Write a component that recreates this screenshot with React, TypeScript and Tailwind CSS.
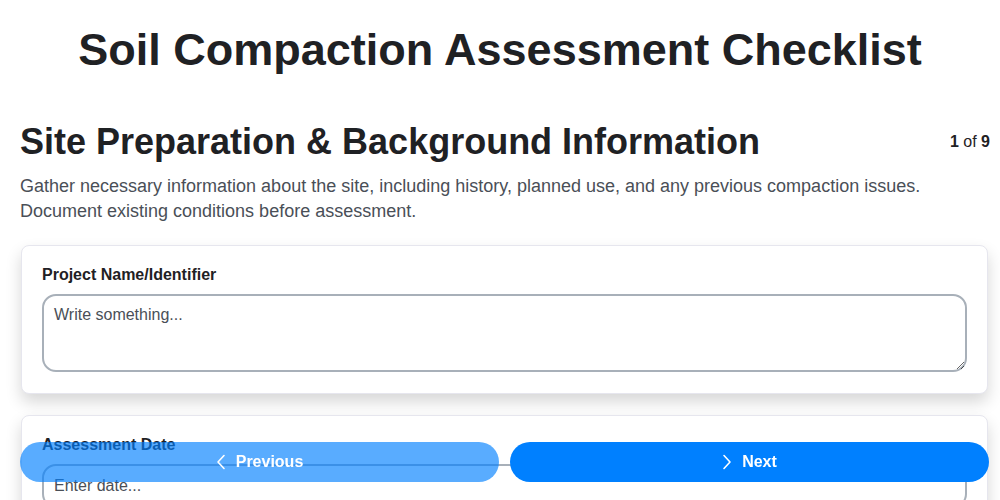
import React from "react";

function ChevronLeft() {
  return (
    <svg width="10" height="16" viewBox="0 0 10 16" fill="none" stroke="currentColor" strokeWidth="1.6" strokeLinecap="round" strokeLinejoin="round">
      <path d="M8 1.5L2 8l6 6.5" />
    </svg>
  );
}
function ChevronRight() {
  return (
    <svg width="10" height="16" viewBox="0 0 10 16" fill="none" stroke="currentColor" strokeWidth="1.6" strokeLinecap="round" strokeLinejoin="round">
      <path d="M2 1.5L8 8l-6 6.5" />
    </svg>
  );
}

export default function App() {
  return (
    <div className="min-h-screen bg-white text-[#1f2124]" style={{ fontFamily: '"Liberation Sans", Arial, sans-serif' }}>
      <h1 className="text-[45px] font-bold text-center leading-[52px] pt-[24px] pb-[44px] px-5">
        Soil Compaction Assessment Checklist
      </h1>
      <div className="pl-5 pr-[10px] pb-24">
        <div className="flex items-start justify-between">
          <h2 className="text-[36px] font-bold leading-[44px]">Site Preparation &amp; Background Information</h2>
          <div className="text-[16px] pt-[10px]">
            <span className="font-bold">1</span> of <span className="font-bold">9</span>
          </div>
        </div>
        <p className="text-[18px] leading-[25px] text-[#4a4f57] mt-[10px]">
          Gather necessary information about the site, including history, planned use, and any previous compaction issues. Document existing conditions before assessment.
        </p>
        <div className="mt-[21px] flex flex-col gap-[21px] pl-px pr-[2px]">
          <div className="bg-white rounded-lg border border-[#e6e6ee] shadow-[0_8px_16px_rgba(0,0,0,0.16)] px-[20px] pt-[20px] pb-[21px]">
            <label className="block text-[16px] font-bold leading-[18px] mb-[10px]">Project Name/Identifier</label>
            <textarea
              className="block w-full h-[78px] rounded-[14px] border-2 border-[#a8b0b9] px-[10px] py-[7px] text-[16px] placeholder:text-[#4a4f57] outline-none resize-y"
              placeholder="Write something..."
              style={{ fontFamily: '"Liberation Sans", Arial, sans-serif' }}
            />
          </div>
          <div className="bg-white rounded-lg border border-[#e6e6ee] shadow-[0_8px_16px_rgba(0,0,0,0.16)] px-[20px] pt-[20px] pb-[21px]">
            <label className="block text-[16px] font-bold leading-[18px] mb-[10px]">Assessment Date</label>
            <input
              className="block w-full h-[44px] rounded-[14px] border-2 border-[#a8b0b9] px-[10px] text-[16px] placeholder:text-[#4a4f57] outline-none"
              placeholder="Enter date..."
              style={{ fontFamily: '"Liberation Sans", Arial, sans-serif' }}
            />
          </div>
        </div>
      </div>
      <div className="fixed bottom-[18px] left-5 right-[11px] flex gap-[11px]">
        <button className="flex-1 h-[40px] rounded-full bg-[#0080ff]/65 text-white font-bold text-[16px] flex items-center justify-center gap-[10px]">
          <ChevronLeft /> Previous
        </button>
        <button className="flex-1 h-[40px] rounded-full bg-[#0080ff] text-white font-bold text-[16px] flex items-center justify-center gap-[10px]">
          <ChevronRight /> Next
        </button>
      </div>
    </div>
  );
}
